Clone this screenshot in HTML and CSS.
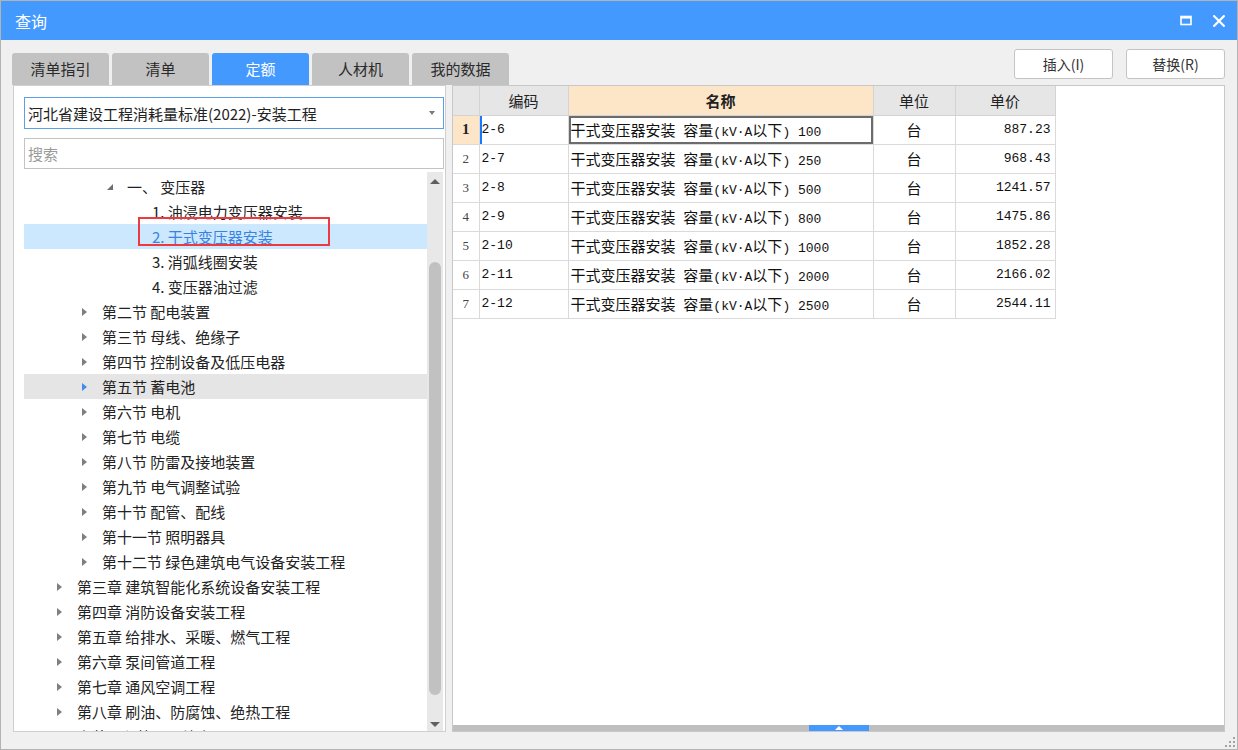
FILE: index.html
```html
<!DOCTYPE html>
<html lang="zh-CN">
<head>
<meta charset="utf-8">
<title>查询</title>
<link rel="stylesheet" href="styles.css">
</head>
<body>
<div class="window">
  <header class="titlebar">
    <span class="title">查询</span>
    <div class="win-ctrls">
      <svg class="ic" width="12" height="11" viewBox="0 0 12 11"><rect x="1" y="1.5" width="10" height="8" fill="none" stroke="#fff" stroke-width="1.6"/><rect x="1" y="1" width="10" height="2.6" fill="#fff"/></svg>
      <svg class="ic" width="12" height="12" viewBox="0 0 12 12"><path d="M1.2 1.2L10.8 10.8M10.8 1.2L1.2 10.8" stroke="#fff" stroke-width="2.2" stroke-linecap="square"/></svg>
    </div>
  </header>

  <div class="toolbar">
    <div class="tabs">
      <div class="tab">清单指引</div>
      <div class="tab">清单</div>
      <div class="tab active">定额</div>
      <div class="tab">人材机</div>
      <div class="tab">我的数据</div>
    </div>
    <div class="actions">
      <div class="btn">插入(I)</div>
      <div class="btn">替换(R)</div>
    </div>
  </div>

  <div class="main">
    <section class="left">
      <div class="select"><span>河北省建设工程消耗量标准(2022)-安装工程</span><i class="caret"></i></div>
      <div class="search">搜索</div>
      <div class="treebox">
        <div class="tree">
          <div class="node l2"><span class="tw"><i class="tri-open"></i></span><span>一、 变压器</span></div>
          <div class="node l3"><span class="tw"></span><span>1. 油浸电力变压器安装</span></div>
          <div class="node l3 sel"><span class="tw"></span><span>2. 干式变压器安装</span><i class="mark"></i></div>
          <div class="node l3"><span class="tw"></span><span>3. 消弧线圈安装</span></div>
          <div class="node l3"><span class="tw"></span><span>4. 变压器油过滤</span></div>
          <div class="node l1"><span class="tw"><i class="tri"></i></span><span>第二节 配电装置</span></div>
          <div class="node l1"><span class="tw"><i class="tri"></i></span><span>第三节 母线、绝缘子</span></div>
          <div class="node l1"><span class="tw"><i class="tri"></i></span><span>第四节 控制设备及低压电器</span></div>
          <div class="node l1 hover"><span class="tw"><i class="tri"></i></span><span>第五节 蓄电池</span></div>
          <div class="node l1"><span class="tw"><i class="tri"></i></span><span>第六节 电机</span></div>
          <div class="node l1"><span class="tw"><i class="tri"></i></span><span>第七节 电缆</span></div>
          <div class="node l1"><span class="tw"><i class="tri"></i></span><span>第八节 防雷及接地装置</span></div>
          <div class="node l1"><span class="tw"><i class="tri"></i></span><span>第九节 电气调整试验</span></div>
          <div class="node l1"><span class="tw"><i class="tri"></i></span><span>第十节 配管、配线</span></div>
          <div class="node l1"><span class="tw"><i class="tri"></i></span><span>第十一节 照明器具</span></div>
          <div class="node l1"><span class="tw"><i class="tri"></i></span><span>第十二节 绿色建筑电气设备安装工程</span></div>
          <div class="node l0"><span class="tw"><i class="tri"></i></span><span>第三章 建筑智能化系统设备安装工程</span></div>
          <div class="node l0"><span class="tw"><i class="tri"></i></span><span>第四章 消防设备安装工程</span></div>
          <div class="node l0"><span class="tw"><i class="tri"></i></span><span>第五章 给排水、采暖、燃气工程</span></div>
          <div class="node l0"><span class="tw"><i class="tri"></i></span><span>第六章 泵间管道工程</span></div>
          <div class="node l0"><span class="tw"><i class="tri"></i></span><span>第七章 通风空调工程</span></div>
          <div class="node l0"><span class="tw"><i class="tri"></i></span><span>第八章 刷油、防腐蚀、绝热工程</span></div>
          <div class="node l0"><span class="tw"><i class="tri"></i></span><span>安装工程第二册补充项目</span></div>
        </div>
        <div class="vscroll">
          <i class="arr-up"></i>
          <div class="thumb"></div>
          <i class="arr-down"></i>
        </div>
      </div>
    </section>

    <section class="right">
      <table class="grid">
        <colgroup>
          <col class="c-no"><col class="c-code"><col class="c-name"><col class="c-unit"><col class="c-price">
        </colgroup>
        <thead>
          <tr><th class="no"></th><th>编码</th><th class="hl">名称</th><th>单位</th><th>单价</th></tr>
        </thead>
        <tbody>
          <tr class="cur"><td class="no">1</td><td class="code">2-6</td><td class="name sel">干式变压器安装<span class="m"> </span>容量<span class="m">(kV·A</span>以下<span class="m">) 100</span></td><td class="unit">台</td><td class="price">887.23</td></tr>
          <tr><td class="no">2</td><td class="code">2-7</td><td class="name">干式变压器安装<span class="m"> </span>容量<span class="m">(kV·A</span>以下<span class="m">) 250</span></td><td class="unit">台</td><td class="price">968.43</td></tr>
          <tr><td class="no">3</td><td class="code">2-8</td><td class="name">干式变压器安装<span class="m"> </span>容量<span class="m">(kV·A</span>以下<span class="m">) 500</span></td><td class="unit">台</td><td class="price">1241.57</td></tr>
          <tr><td class="no">4</td><td class="code">2-9</td><td class="name">干式变压器安装<span class="m"> </span>容量<span class="m">(kV·A</span>以下<span class="m">) 800</span></td><td class="unit">台</td><td class="price">1475.86</td></tr>
          <tr><td class="no">5</td><td class="code">2-10</td><td class="name">干式变压器安装<span class="m"> </span>容量<span class="m">(kV·A</span>以下<span class="m">) 1000</span></td><td class="unit">台</td><td class="price">1852.28</td></tr>
          <tr><td class="no">6</td><td class="code">2-11</td><td class="name">干式变压器安装<span class="m"> </span>容量<span class="m">(kV·A</span>以下<span class="m">) 2000</span></td><td class="unit">台</td><td class="price">2166.02</td></tr>
          <tr><td class="no">7</td><td class="code">2-12</td><td class="name">干式变压器安装<span class="m"> </span>容量<span class="m">(kV·A</span>以下<span class="m">) 2500</span></td><td class="unit">台</td><td class="price">2544.11</td></tr>
        </tbody>
      </table>
      <div class="hbar"><div class="handle"><i></i></div></div>
    </section>
  </div>

  <footer class="status">
    <svg width="10" height="10" viewBox="0 0 10 10" fill="#a3a3a3">
      <rect x="8" y="0" width="2" height="2"/>
      <rect x="4" y="4" width="2" height="2"/><rect x="8" y="4" width="2" height="2"/>
      <rect x="0" y="8" width="2" height="2"/><rect x="4" y="8" width="2" height="2"/><rect x="8" y="8" width="2" height="2"/>
    </svg>
  </footer>
</div>
</body>
</html>
```

FILE: styles.css
```css
* { box-sizing: border-box; margin: 0; padding: 0; }
html, body { width: 1238px; height: 750px; overflow: hidden; }
body {
  font-family: "Noto Sans CJK SC", "Microsoft YaHei", sans-serif;
  color: #222;
  background: #fff;
}

.window {
  width: 1238px;
  height: 750px;
  border: 1px solid #b3b3b3;
  background: #f0f0f0;
  display: flex;
  flex-direction: column;
}

/* title bar */
.titlebar {
  height: 39px;
  flex: none;
  background: #4499ff;
  color: #fff;
  display: flex;
  align-items: center;
  padding: 0 12px 0 14px;
}
.title { font-size: 16px; line-height: 20px; }
.win-ctrls { margin-left: auto; display: flex; align-items: center; gap: 21px; }
.ic { display: block; }

/* tabs + buttons */
.toolbar {
  height: 45px;
  flex: none;
  display: flex;
  align-items: flex-end;
  padding: 0 12px;
}
.tabs { display: flex; gap: 3px; margin-left: -1px; }
.tab {
  width: 97px;
  height: 32px;
  line-height: 32px;
  text-align: center;
  font-size: 15px;
  color: #2a2a2a;
  background: #c2c2c2;
  border-radius: 3px 3px 0 0;
}
.tab.active { background: #4499ff; color: #fff; }
.actions {
  margin-left: auto;
  align-self: flex-start;
  margin-top: 9px;
  display: flex;
  gap: 13px;
}
.btn {
  width: 99px;
  height: 30px;
  line-height: 28px;
  text-align: center;
  background: #fff;
  border: 1px solid #c4c4c4;
  border-radius: 3px;
  font-size: 14px;
  color: #333;
}

/* main area */
.main {
  flex: 1;
  min-height: 0;
  display: flex;
  gap: 6px;
  padding: 0 12px;
}

.left {
  width: 433px;
  flex: none;
  background: #fff;
  border: 1px solid #cfcfcf;
  padding: 11px 1px 0 10px;
  display: flex;
  flex-direction: column;
}
.select {
  height: 32px;
  width: 420px;
  flex: none;
  border: 1px solid #5b9fe9;
  display: flex;
  align-items: center;
  padding-left: 3px;
  font-size: 15px;
  color: #222;
}
.caret {
  margin-left: auto;
  margin-right: 8px;
  border-top: 4px solid #7a7a7a;
  border-left: 3.5px solid transparent;
  border-right: 3.5px solid transparent;
}
.search {
  height: 31px;
  width: 420px;
  flex: none;
  margin-top: 9px;
  border: 1px solid #c3c3c3;
  display: flex;
  align-items: center;
  padding-left: 3px;
  font-size: 15px;
  color: #9a9a9a;
}

.treebox {
  flex: 1;
  min-height: 0;
  margin-top: 3px;
  display: flex;
  padding-right: 1px;
}
.tree { flex: 1; overflow: hidden; padding-top: 2px; }
.node {
  height: 25px;
  line-height: 25px;
  font-size: 15px;
  color: #222;
  display: flex;
  align-items: center;
  white-space: nowrap;
  position: relative;
}
.node.l0 { padding-left: 33px; }
.node.l1 { padding-left: 58px; }
.node.l2 { padding-left: 83px; }
.node.l3 { padding-left: 108px; }
.tw { width: 20px; flex: none; display: flex; align-items: center; }
.tri {
  border-left: 5px solid #7f7f7f;
  border-top: 4px solid transparent;
  border-bottom: 4px solid transparent;
}
.tri-open {
  margin-top: 1px;
  border-bottom: 6px solid #6e6e6e;
  border-left: 6px solid transparent;
}
.node.sel { background: #cce8ff; color: #3a82e0; }
.node.hover { background: #e5e5e5; }
.node.hover .tri { border-left-color: #3d8ef0; }
.mark {
  position: absolute;
  left: 114px;
  top: -7px;
  width: 192px;
  height: 29px;
  border: 2px solid #ec3a3f;
}

.vscroll {
  width: 16px;
  flex: none;
  background: #e8e8e8;
  display: flex;
  flex-direction: column;
  align-items: center;
}
.arr-up {
  margin-top: 7px;
  border-bottom: 5px solid #5f5f5f;
  border-left: 5px solid transparent;
  border-right: 5px solid transparent;
}
.thumb {
  width: 12px;
  height: 433px;
  margin-top: 78px;
  background: #c1c1c1;
  border-radius: 6px;
}
.arr-down {
  margin-top: auto;
  margin-bottom: 4px;
  border-top: 5px solid #5f5f5f;
  border-left: 5px solid transparent;
  border-right: 5px solid transparent;
}

/* right panel */
.right {
  flex: 1;
  background: #fff;
  border: 1px solid #c8c8c8;
  display: flex;
  flex-direction: column;
}
.grid {
  border-collapse: collapse;
  table-layout: fixed;
  width: 602px;
}
.c-no { width: 26px; }
.c-code { width: 89px; }
.c-name { width: 305px; }
.c-unit { width: 82px; }
.c-price { width: 100px; }

.grid th {
  height: 29px;
  background: #e6e6e6;
  border: 1px solid #d3d3d3;
  border-top: none;
  font-size: 15px;
  font-weight: normal;
  color: #222;
  text-align: center;
}
.grid th.hl { background: #fde6c8; font-weight: bold; }
.grid td {
  height: 29px;
  border: 1px solid #dadada;
  padding: 0 2px;
  white-space: nowrap;
  color: #111;
}
.grid .no { border-left: none; }
.grid td.no {
  text-align: center;
  font-family: "Liberation Serif", serif;
  font-size: 13px;
  color: #444;
  padding: 0;
}
.grid tr.cur td.no { background: #fde6c8; font-weight: bold; font-size: 15px; color: #222; }
.grid td.code, .grid td.price, .m {
  font-family: "Liberation Mono", monospace;
  font-size: 13px;
}
.grid td.name { font-size: 15px; }
.grid td.unit { text-align: center; font-size: 15px; }
.grid td.price { text-align: right; padding-right: 4px; }
.grid tr.cur td.code { box-shadow: inset 2px 0 0 #1677ff; }
.grid td.name.sel { box-shadow: inset 0 0 0 2px #6c6c6c; }

.hbar {
  margin-top: auto;
  height: 6px;
  background: #bfbfbf;
  display: flex;
  justify-content: center;
}
.handle {
  width: 60px;
  background: #4499ff;
  display: flex;
  align-items: center;
  justify-content: center;
}
.handle i {
  border-bottom: 4px solid #fff;
  border-left: 4px solid transparent;
  border-right: 4px solid transparent;
}

.status {
  height: 17px;
  flex: none;
  display: flex;
  justify-content: flex-end;
  align-items: flex-end;
  padding: 0 2px 2px 0;
}
.status svg { display: block; }
```
